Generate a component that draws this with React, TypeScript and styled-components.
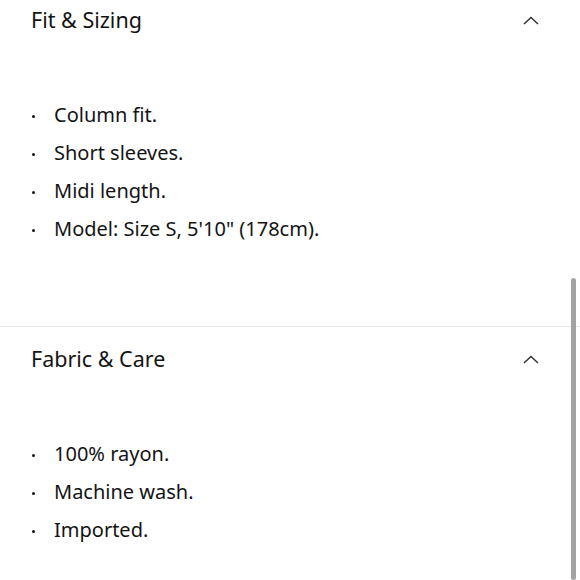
import styled, { createGlobalStyle } from 'styled-components'

const GlobalStyle = createGlobalStyle`
  body {
    margin: 0;
    background: #ffffff;
    font-family: "Noto Sans", "Liberation Sans", sans-serif;
    color: #141414;
    overflow: hidden;
  }
`

const Page = styled.div`
  width: 580px;
  height: 580px;
  overflow: hidden;
  position: relative;
`

const Section = styled.section<{ $first?: boolean }>`
  padding: ${(p) => (p.$first ? '6px' : '18px')} 41px 78px 31px;
  border-top: ${(p) => (p.$first ? 'none' : '1px solid #e6e6e6')};
`

const Header = styled.div`
  display: flex;
  align-items: center;
  justify-content: space-between;
  height: 28px;
`

const Title = styled.h3`
  margin: 0;
  font-size: 21.5px;
  font-weight: 400;
  line-height: 28px;
`

const List = styled.ul`
  list-style: none;
  margin: 62px 0 0;
  padding: 0;
`

const Item = styled.li`
  display: flex;
  align-items: center;
  height: 38px;
  font-size: 20px;
  line-height: 38px;

  &::before {
    content: '';
    width: 3px;
    height: 3px;
    border-radius: 50%;
    background: #141414;
    margin: 2px 19px 0 1px;
    flex-shrink: 0;
  }
`

const ScrollThumb = styled.div`
  position: absolute;
  right: 4px;
  top: 278px;
  bottom: 0;
  width: 5px;
  border-radius: 3px;
  background: #a3a3a3;
`

function Chevron() {
  return (
    <svg width="16" height="9" viewBox="0 0 16 9" fill="none">
      <path d="M1 8L8 1.5L15 8" stroke="#333" strokeWidth="1.5" />
    </svg>
  )
}

const sections = [
  {
    title: 'Fit & Sizing',
    items: ['Column fit.', 'Short sleeves.', 'Midi length.', 'Model: Size S, 5\'10" (178cm).'],
  },
  {
    title: 'Fabric & Care',
    items: ['100% rayon.', 'Machine wash.', 'Imported.'],
  },
]

export default function App() {
  return (
    <Page>
      <GlobalStyle />
      {sections.map((s, i) => (
        <Section key={s.title} $first={i === 0}>
          <Header>
            <Title>{s.title}</Title>
            <Chevron />
          </Header>
          <List>
            {s.items.map((it) => (
              <Item key={it}>{it}</Item>
            ))}
          </List>
        </Section>
      ))}
      <ScrollThumb />
    </Page>
  )
}
